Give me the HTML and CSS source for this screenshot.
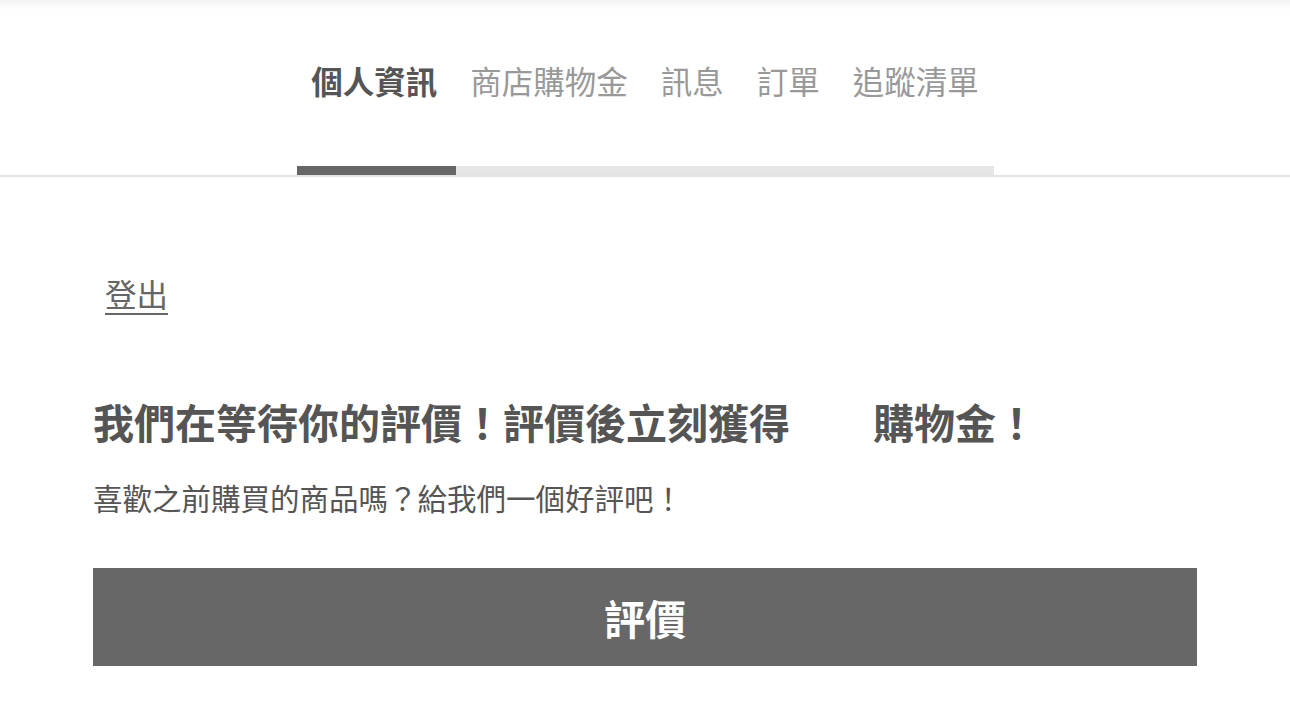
FILE: index.html
```html
<!DOCTYPE html>
<html lang="zh-Hant">
<head>
  <meta charset="UTF-8">
  <meta name="viewport" content="width=device-width, initial-scale=1">
  <title>個人資訊</title>
  <link rel="stylesheet" href="styles.css">
</head>
<body>

  <div class="top-shade"></div>

  <nav class="tabs">
    <a class="tab active" href="#">個人資訊</a>
    <a class="tab" href="#">商店購物金</a>
    <a class="tab" href="#">訊息</a>
    <a class="tab" href="#">訂單</a>
    <a class="tab" href="#">追蹤清單</a>
  </nav>

  <div class="tab-rule">
    <div class="track">
      <div class="track-fill"></div>
    </div>
  </div>

  <main class="content">
    <a class="logout" href="#">登出</a>

    <h1 class="review-title">我們在等待你的評價！評價後立刻獲得<span class="amount"></span>購物金！</h1>
    <p class="review-sub">喜歡之前購買的商品嗎？給我們一個好評吧！</p>

    <button class="review-btn">評價</button>
  </main>

</body>
</html>
```

FILE: styles.css
```css
body {
  margin: 0;
  padding: 0;
  background: #fff;
  font-family: "Noto Sans CJK TC", "Noto Sans", sans-serif;
  color: #666;
}

.top-shade {
  height: 10px;
  background: linear-gradient(#f3f3f3, #fff);
}

.tabs {
  display: flex;
  justify-content: center;
  gap: 33px;
  padding-top: 55px;
  height: 110px;
  box-sizing: border-box;
}

.tab {
  font-size: 31.5px;
  line-height: 1;
  color: #999;
  text-decoration: none;
}

.tab.active {
  color: #555;
  font-weight: bold;
}

.tab-rule {
  margin-top: 46px;
  border-bottom: 2px solid #e3e3e3;
}

.track {
  width: 697px;
  height: 9px;
  margin: 0 auto;
  background: #e6e6e6;
}

.track-fill {
  width: 159px;
  height: 100%;
  background: #666;
}

.content {
  width: 1104px;
  margin-left: 93px;
  padding-top: 98px;
}

.logout {
  display: inline-block;
  margin-left: 12px;
  font-size: 31.5px;
  line-height: 1.2;
  color: #666;
  text-decoration: underline;
  text-underline-offset: 6px;
  text-decoration-thickness: 2px;
}

.review-title {
  margin: 84px 0 0;
  font-size: 41px;
  line-height: 1.2;
  font-weight: bold;
  color: #555;
}

.amount {
  display: inline-block;
  width: 83px;
}

.review-sub {
  margin: 34px 0 0;
  font-size: 29.5px;
  line-height: 1.2;
  color: #555;
}

.review-btn {
  display: block;
  width: 100%;
  height: 98px;
  margin-top: 53px;
  border: none;
  background: #676767;
  color: #fff;
  font-family: inherit;
  font-size: 41px;
  font-weight: bold;
  cursor: pointer;
}
```
